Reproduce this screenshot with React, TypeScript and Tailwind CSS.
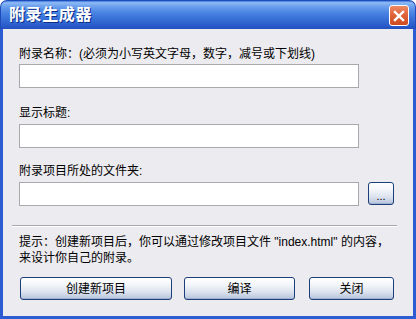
import React from "react";

const font = { fontFamily: '"Liberation Sans", "Noto Sans CJK SC", sans-serif' };

function XPButton({ children, className = "" }: { children: React.ReactNode; className?: string }) {
  return (
    <button
      className={
        "h-[23px] rounded-[3px] border border-[#1c3f7a] bg-[linear-gradient(to_bottom,#ffffff_0%,#f4f6fa_30%,#dde4ef_65%,#b6c3db_100%)] text-[12px] leading-[14px] text-black flex items-center justify-center shadow-[inset_0_-1px_0_#a2b1cd] " +
        className
      }
    >
      {children}
    </button>
  );
}

export default function App() {
  return (
    <div className="w-[416px] h-[319px] flex flex-col" style={font}>
      {/* Title bar */}
      <div className="h-[29px] rounded-t-[7px] flex items-center justify-between pl-[8px] pr-[6px] bg-[linear-gradient(to_bottom,#3f78e0_0%,#8fbaf5_6%,#6fa2ee_18%,#4b86e2_40%,#3a72d8_62%,#2b5ecc_85%,#234fc0_100%)] border-x border-t border-[#1e4cba]">
        <span className="text-white font-bold text-[16px] leading-[18px] tracking-[0.6px] [text-shadow:1px_1px_0_#0c2c86]">
          附录生成器
        </span>
        <div className="w-[20px] h-[21px] mt-[1px] rounded-[3px] border border-white bg-[linear-gradient(to_bottom,#ee8a66_0%,#e0643c_45%,#cd4a1f_100%)] flex items-center justify-center">
          <svg width="12" height="12" viewBox="0 0 12 12">
            <path d="M2 2 L10 10 M10 2 L2 10" stroke="#ffffff" strokeWidth="2.4" strokeLinecap="square" />
          </svg>
        </div>
      </div>

      {/* Body */}
      <div className="flex-1 flex flex-col bg-[#ecebef] border-x-[3px] border-b-[3px] border-[#2c5dd2] pl-[16px] pt-[18px] text-black">
        <div className="h-[14px] text-[12px] leading-[14px] whitespace-nowrap">
          附录名称：(必须为小写英文字母，数字，减号或下划线)
        </div>
        <input className="mt-[3px] h-[24px] w-[340px] bg-white border border-[#a9a8ad] outline-none" readOnly />

        <div className="mt-[18px] h-[14px] text-[12px] leading-[14px]">显示标题:</div>
        <input className="mt-[4px] h-[24px] w-[340px] bg-white border border-[#a9a8ad] outline-none" readOnly />

        <div className="mt-[16px] h-[14px] text-[12px] leading-[14px]">附录项目所处的文件夹:</div>
        <div className="mt-[4px] flex items-start">
          <input className="h-[24px] w-[340px] bg-white border border-[#a9a8ad] outline-none" readOnly />
          <XPButton className="ml-[9px] w-[26px]">
            <span className="text-[11px] leading-[10px] pt-[4px]">...</span>
          </XPButton>
        </div>

        <div className="mt-[19px] -ml-[7px] w-[385px] border-t border-[#a9a8ad] border-b border-b-white" />

        <div className="mt-[7px] text-[12px] leading-[16px] whitespace-nowrap">
          <div>提示：创建新项目后，你可以通过修改项目文件 "index.html" 的内容，</div>
          <div>来设计你自己的附录。</div>
        </div>

        <div className="mt-[11px] ml-[1px] flex">
          <XPButton className="w-[152px]">创建新项目</XPButton>
          <XPButton className="ml-[12px] w-[111px]">编译</XPButton>
          <XPButton className="ml-[14px] w-[85px]">关闭</XPButton>
        </div>
      </div>
    </div>
  );
}
